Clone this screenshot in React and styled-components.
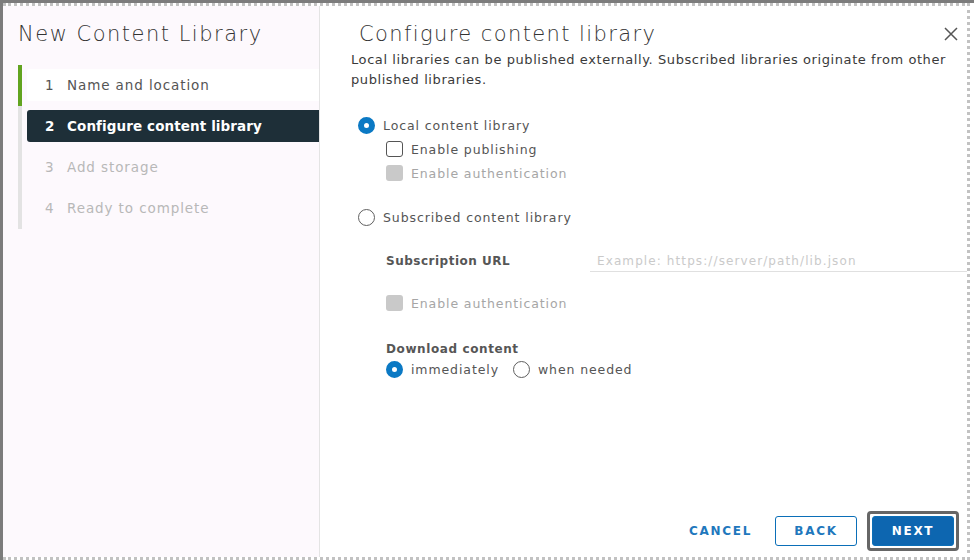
import styled, { createGlobalStyle } from "styled-components";

const GlobalStyle = createGlobalStyle`
  html, body {
    margin: 0;
    padding: 0;
    background: #7c7c7c;
    font-family: "DejaVu Sans", "Liberation Sans", sans-serif;
  }
  * { box-sizing: border-box; }
`;

const Frame = styled.div`
  width: 974px;
  height: 560px;
  padding: 3px 0 0 3px;
  background: #7c7c7c;
`;

const Paper = styled.div`
  height: 100%;
  background: #ffffff;
  padding-right: 4px;
`;

const Dialog = styled.div`
  display: flex;
  height: 100%;
  border-top: 3px dotted #c2c2c2;
  border-right: 3px dotted #c2c2c2;
  border-bottom: 3px dotted #c2c2c2;
`;

const Sidebar = styled.aside`
  width: 317px;
  flex: none;
  background: #fdf9fd;
  border-right: 1px solid #e4e4e4;
  padding: 14px 0 0 15px;
`;

const SideTitle = styled.h1`
  margin: 0 0 17px;
  font-size: 21px;
  font-weight: 200;
  letter-spacing: 1.5px;
  line-height: 28px;
  color: #333;
`;

const Steps = styled.ol`
  list-style: none;
  margin: 0;
  padding: 0;
`;

const Step = styled.li`
  display: flex;
  height: 41px;
`;

const Track = styled.div`
  width: 4px;
  flex: none;
  background: ${(p) => (p.$done ? "#62a420" : "#e3e3e3")};
`;

const StepRow = styled.div`
  flex: 1;
  margin: 4px 0 4px 5px;
  height: 32px;
  display: flex;
  align-items: center;
  padding-left: 18px;
  font-size: 13.5px;
  border-radius: 3px 0 0 3px;
  letter-spacing: ${(p) => (p.$active ? "0.1px" : "0.9px")};
  background: ${(p) => (p.$active ? "#1e2f38" : p.$done ? "#ffffff" : "transparent")};
  color: ${(p) => (p.$active ? "#ffffff" : p.$done ? "#555" : "#b8b8b8")};
  font-weight: ${(p) => (p.$active ? 600 : 400)};
`;

const StepNum = styled.span`
  width: 22px;
`;

const Main = styled.section`
  flex: 1;
  display: flex;
  flex-direction: column;
  padding: 14px 7px 6px 31px;
`;

const Header = styled.div`
  display: flex;
  align-items: center;
  justify-content: space-between;
  padding-left: 8px;
`;

const Title = styled.h2`
  margin: 0;
  font-size: 21px;
  font-weight: 200;
  letter-spacing: 1.4px;
  line-height: 28px;
  color: #333;
`;

const Close = styled.button`
  background: none;
  border: none;
  padding: 0;
  color: #555;
  display: flex;
  margin-right: 1px;
`;

const Description = styled.p`
  margin: 2px 0 0;
  font-size: 13px;
  letter-spacing: 0.58px;
  line-height: 20px;
  color: #3a3a3a;
`;

const Form = styled.div`
  margin-top: 23px;
  display: flex;
  flex-direction: column;
  padding-left: 7px;
`;

const OptionRow = styled.label`
  display: flex;
  align-items: center;
  gap: 8px;
  height: 24px;
  font-size: 12.5px;
  letter-spacing: 0.9px;
  color: ${(p) => (p.$disabled ? "#a6a6a6" : "#555")};
  margin-left: ${(p) => p.$indent || 0}px;
  margin-top: ${(p) => p.$top || 0}px;
`;

const Radio = styled.span`
  width: 17px;
  height: 17px;
  border-radius: 50%;
  flex: none;
  border: ${(p) => (p.$checked ? "6px solid #0b79c4" : "1.5px solid #5f5f5f")};
  background: #fff;
`;

const Check = styled.span`
  width: 17px;
  height: 16px;
  flex: none;
  border-radius: 3px;
  border: ${(p) => (p.$disabled ? "none" : "1.5px solid #555")};
  background: ${(p) => (p.$disabled ? "#c9c9c9" : "#fff")};
`;

const FieldRow = styled.div`
  display: flex;
  align-items: center;
  margin: 20px -7px 0 28px;
  height: 24px;
`;

const FieldLabel = styled.span`
  width: 204px;
  font-size: 12px;
  font-weight: 600;
  letter-spacing: 0.5px;
  color: #565656;
`;

const Input = styled.input`
  flex: 1;
  height: 22px;
  border: none;
  border-bottom: 1px solid #e0e0e0;
  font-family: inherit;
  font-size: 12px;
  letter-spacing: 1.1px;
  padding: 0 7px;
  outline: none;
  &::placeholder { color: #cacaca; }
`;

const GroupLabel = styled.div`
  margin: 27px 0 0 28px;
  font-size: 12px;
  font-weight: 600;
  letter-spacing: 0.6px;
  color: #565656;
`;

const InlineOptions = styled.div`
  display: flex;
  gap: 14px;
  margin: 1px 0 0 28px;
`;

const Footer = styled.div`
  margin-top: auto;
  display: flex;
  justify-content: flex-end;
  align-items: center;
  gap: 10px;
`;

const Button = styled.button`
  height: 30px;
  min-width: 82px;
  padding: 0 12px;
  font-family: inherit;
  font-size: 12px;
  font-weight: 700;
  letter-spacing: 1.7px;
  border-radius: 3px;
  border: 1px solid ${(p) => (p.$variant === "link" ? "transparent" : "#0b6fb8")};
  background: ${(p) => (p.$variant === "primary" ? "#0d66b0" : "#fff")};
  color: ${(p) => (p.$variant === "primary" ? "#fff" : "#1f78bd")};
`;

const Focus = styled.div`
  padding: 2px;
  border: 3px solid #666;
  border-radius: 4px;
  margin-right: 1px;
`;

const steps = [
  { n: 1, label: "Name and location", state: "done" },
  { n: 2, label: "Configure content library", state: "active" },
  { n: 3, label: "Add storage" },
  { n: 4, label: "Ready to complete" },
];

export default function App() {
  return (
    <Frame>
      <GlobalStyle />
      <Paper>
        <Dialog>
          <Sidebar>
            <SideTitle>New Content Library</SideTitle>
            <Steps>
              {steps.map((s) => (
                <Step key={s.n}>
                  <Track $done={s.state === "done"} />
                  <StepRow $active={s.state === "active"} $done={s.state === "done"}>
                    <StepNum>{s.n}</StepNum>
                    {s.label}
                  </StepRow>
                </Step>
              ))}
            </Steps>
          </Sidebar>
          <Main>
            <Header>
              <Title>Configure content library</Title>
              <Close aria-label="Close">
                <svg width="16" height="16" viewBox="0 0 16 16">
                  <path d="M2 2 L14 14 M14 2 L2 14" stroke="#555" strokeWidth="1.5" fill="none" />
                </svg>
              </Close>
            </Header>
            <Description>
              Local libraries can be published externally. Subscribed libraries originate from other
              published libraries.
            </Description>
            <Form>
              <OptionRow>
                <Radio $checked />
                Local content library
              </OptionRow>
              <OptionRow $indent={28}>
                <Check />
                Enable publishing
              </OptionRow>
              <OptionRow $indent={28} $disabled>
                <Check $disabled />
                Enable authentication
              </OptionRow>
              <OptionRow $top={20}>
                <Radio />
                Subscribed content library
              </OptionRow>
              <FieldRow>
                <FieldLabel>Subscription URL</FieldLabel>
                <Input placeholder="Example: https://server/path/lib.json" />
              </FieldRow>
              <OptionRow $indent={28} $top={18} $disabled>
                <Check $disabled />
                Enable authentication
              </OptionRow>
              <GroupLabel>Download content</GroupLabel>
              <InlineOptions>
                <OptionRow>
                  <Radio $checked />
                  immediately
                </OptionRow>
                <OptionRow>
                  <Radio />
                  when needed
                </OptionRow>
              </InlineOptions>
            </Form>
            <Footer>
              <Button $variant="link">CANCEL</Button>
              <Button>BACK</Button>
              <Focus>
                <Button $variant="primary">NEXT</Button>
              </Focus>
            </Footer>
          </Main>
        </Dialog>
      </Paper>
    </Frame>
  );
}
